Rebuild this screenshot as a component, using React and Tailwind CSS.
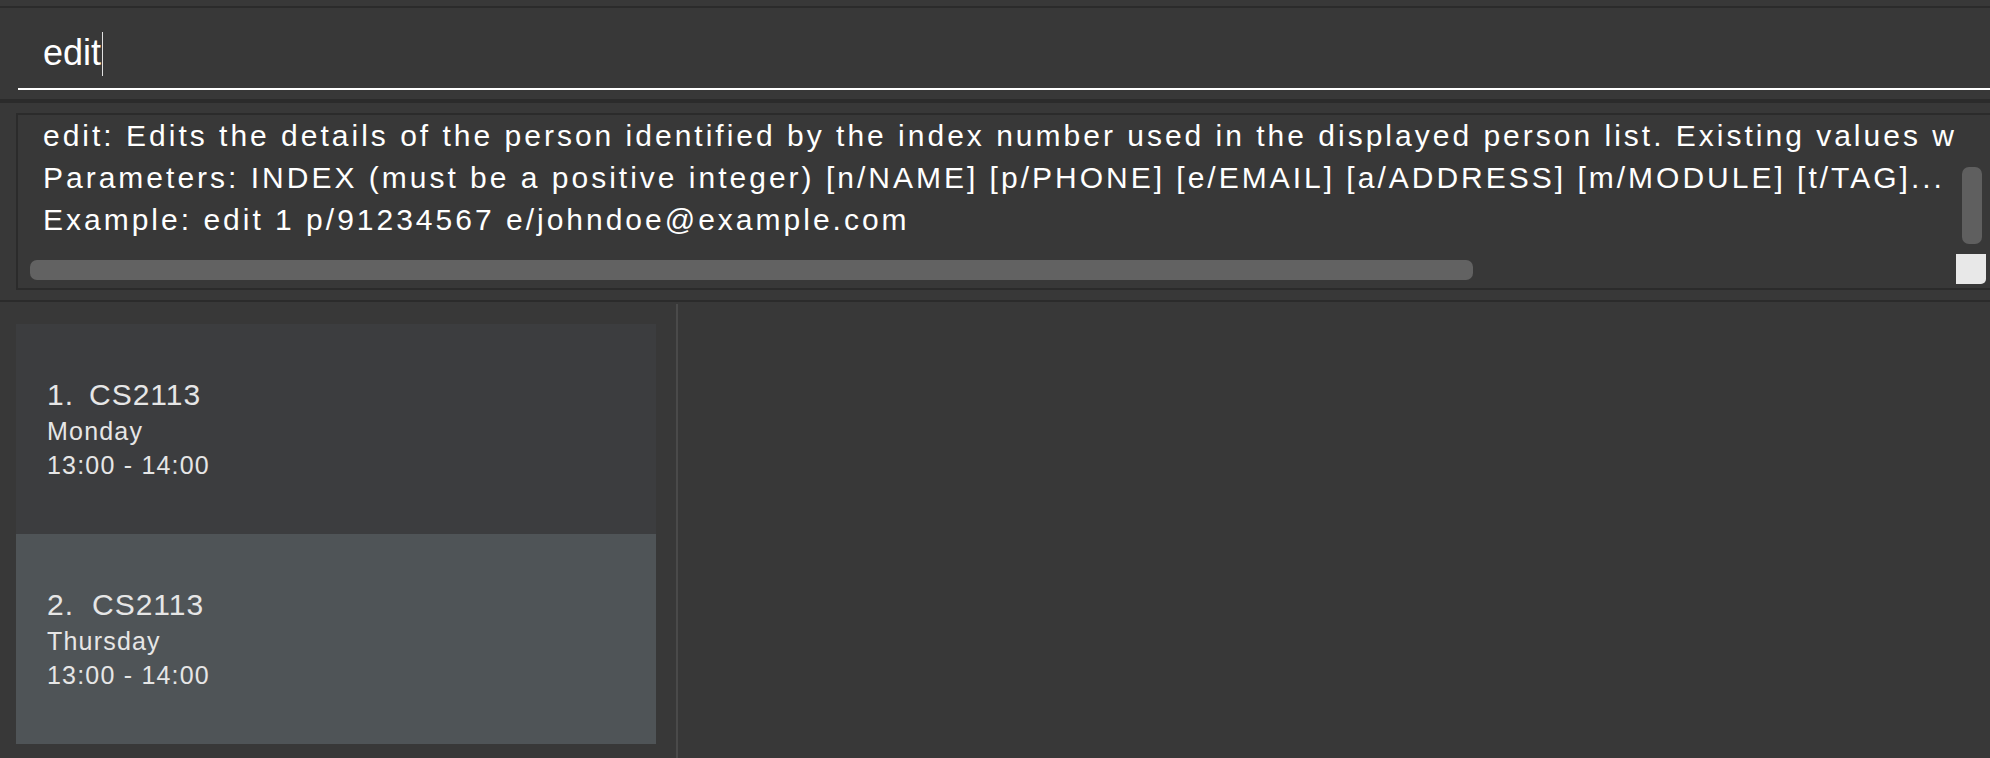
const resultLines = [
  "edit: Edits the details of the person identified by the index number used in the displayed person list. Existing values will be overwritten by the input values.",
  "Parameters: INDEX (must be a positive integer) [n/NAME] [p/PHONE] [e/EMAIL] [a/ADDRESS] [m/MODULE] [t/TAG]...",
  "Example: edit 1 p/91234567 e/johndoe@example.com",
];

const lessons = [
  { idx: "1.", w: "w-[42px]", code: "CS2113", day: "Monday", time: "13:00 - 14:00", bg: "bg-[#3c3d3f]" },
  { idx: "2.", w: "w-[45px]", code: "CS2113", day: "Thursday", time: "13:00 - 14:00", bg: "bg-[#4f5457]" },
];

export default function App() {
  return (
    <div className="w-[1990px] h-[758px] bg-[#383838] flex flex-col overflow-hidden font-['Liberation_Sans',Arial,sans-serif]">
      <div className="h-[6px] shrink-0" />
      <div className="h-[2px] shrink-0 bg-[#2b2b2b]" />

      {/* command box */}
      <div className="h-[80px] shrink-0 flex items-start pl-[43px]">
        <span className="mt-[27px] text-[36px] leading-[36px] text-white">edit</span>
        <div className="mt-[24px] ml-[1px] w-px h-[44px] bg-[#e0e0e0]" />
      </div>
      <div className="h-[2px] shrink-0 ml-[18px] bg-white" />
      <div className="h-[9px] shrink-0" />
      <div className="h-[4px] shrink-0 bg-[#2b2b2b]" />
      <div className="h-[10px] shrink-0" />

      {/* result display */}
      <div className="h-[177px] shrink-0 ml-4 border-2 border-r-0 border-[#2b2b2b] flex">
        <div className="flex-1 min-w-0 flex flex-col">
          <div className="pl-[25px] overflow-hidden">
            {resultLines.map((line, i) => (
              <div key={i} className="whitespace-nowrap text-[30px] leading-[42px] tracking-[3px] text-white">
                {line}
              </div>
            ))}
          </div>
          <div className="mt-[19px] pl-[12px]">
            <div className="w-[1443px] h-[20px] rounded-[7px] bg-[#626262]" />
          </div>
        </div>
        <div className="w-[34px] shrink-0 flex flex-col">
          <div className="mt-[52px] ml-[6px] w-[20px] h-[77px] rounded-[7px] bg-[#5f5f5f]" />
          <div className="mt-[10px] w-[30px] h-[30px] rounded-br-[5px] bg-[#e8e8e8]" />
        </div>
      </div>

      <div className="h-[10px] shrink-0" />
      <div className="h-[2px] shrink-0 bg-[#2b2b2b]" />

      {/* lesson list + detail */}
      <div className="flex-1 flex min-h-0">
        <div className="w-[676px] shrink-0 pt-[22px] pl-4 pr-5 flex flex-col">
          {lessons.map((l, i) => (
            <div key={i} className={`h-[210px] shrink-0 ${l.bg} flex flex-col justify-center pl-[31px] text-[#e6e6e6]`}>
              <div className="flex text-[30px] leading-[36px] tracking-[1px]">
                <span className={l.w}>{l.idx}</span>
                <span>{l.code}</span>
              </div>
              <div className="text-[25px] leading-[36px] tracking-[1.2px]">{l.day}</div>
              <div className="text-[25px] leading-[33px] tracking-[1.2px]">{l.time}</div>
            </div>
          ))}
        </div>
        <div className="w-[2px] shrink-0 mt-[2px] bg-[#4a4a4a]" />
        <div className="flex-1" />
      </div>
    </div>
  );
}
